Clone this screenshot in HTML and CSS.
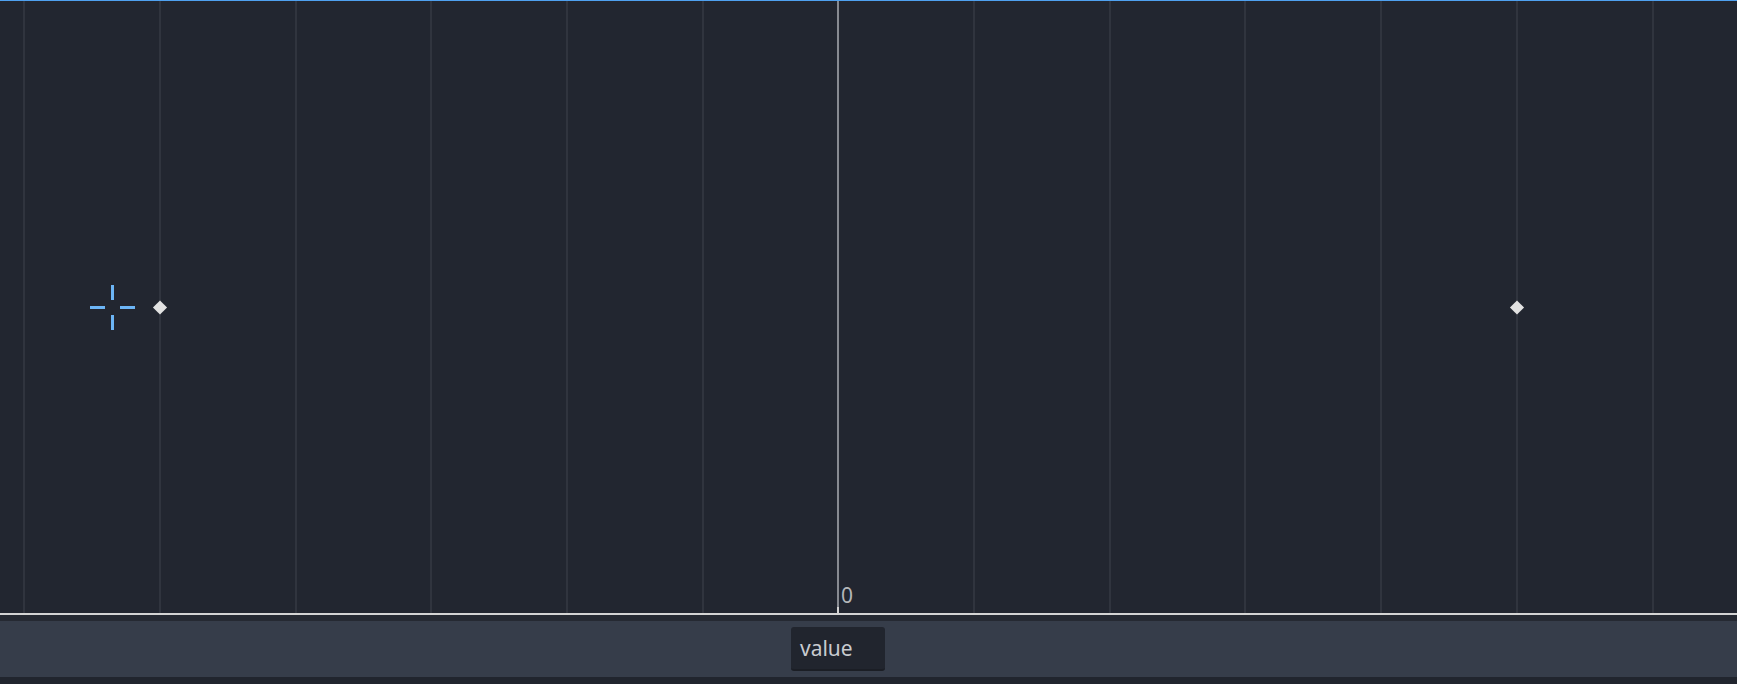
FILE: index.html
```html
<!DOCTYPE html>
<html>
  <head>
    <meta charset="utf-8">
    <title>Curve</title>
    <link rel="stylesheet" href="styles.css">
  </head>
  <body>
    <div class="graph">
      <svg class="grid" width="1737" height="612" viewBox="0 0 1737 612">
        <g fill="#30343e">
          <rect x="23" y="0" width="2" height="612"/>
          <rect x="159" y="0" width="2" height="612"/>
          <rect x="295" y="0" width="2" height="612"/>
          <rect x="430" y="0" width="2" height="612"/>
          <rect x="566" y="0" width="2" height="612"/>
          <rect x="702" y="0" width="2" height="612"/>
          <rect x="973" y="0" width="2" height="612"/>
          <rect x="1109" y="0" width="2" height="612"/>
          <rect x="1244" y="0" width="2" height="612"/>
          <rect x="1380" y="0" width="2" height="612"/>
          <rect x="1516" y="0" width="2" height="612"/>
          <rect x="1652" y="0" width="2" height="612"/>
        </g>
        <!-- zero axis -->
        <rect x="837" y="0" width="2" height="612" fill="#878a91"/>
        <rect x="837" y="606" width="2" height="6" fill="#d4d4d4"/>
        <!-- crosshair -->
        <g fill="#6cb5f6">
          <rect x="111" y="284" width="3" height="15"/>
          <rect x="111" y="314" width="3" height="15"/>
          <rect x="90" y="305" width="15" height="3"/>
          <rect x="120" y="305" width="15" height="3"/>
        </g>
        <!-- points -->
        <g fill="#e2e2e2">
          <rect x="155" y="301.5" width="10" height="10" transform="rotate(45 160 306.5)"/>
          <rect x="1512" y="301.5" width="10" height="10" transform="rotate(45 1517 306.5)"/>
        </g>
      </svg>
      <span class="zero">0</span>
    </div>
    <div class="axis"></div>
    <div class="gap"></div>
    <div class="bar">
      <div class="field">value</div>
    </div>
  </body>
</html>
```

FILE: styles.css
```css
html, body {
  margin: 0;
  padding: 0;
  background-color: #21252e;
  font-family: "Noto Sans", "DejaVu Sans", sans-serif;
  overflow: hidden;
}

.graph {
  position: relative;
  height: 612px;
  background-color: #222630;
  border-top: 1px solid #4fa1f0;
}

.grid {
  display: block;
}

.zero {
  position: absolute;
  left: 841px;
  top: 584px;
  font-size: 21px;
  line-height: 1;
  color: #b4b6ba;
}

.axis {
  height: 2px;
  background-color: #d4d4d4;
}

.gap {
  height: 6px;
  background-color: #252932;
}

.bar {
  height: 56px;
  box-sizing: border-box;
  padding: 6px 0 0 791px;
  background-color: #363d4a;
}

.field {
  width: 94px;
  height: 44px;
  box-sizing: border-box;
  padding: 0 9px;
  font-size: 21px;
  line-height: 42px;
  color: #c8cbd0;
  background-color: #21252e;
  border-bottom: 2px solid #1b1e25;
  border-radius: 3px;
}
```
